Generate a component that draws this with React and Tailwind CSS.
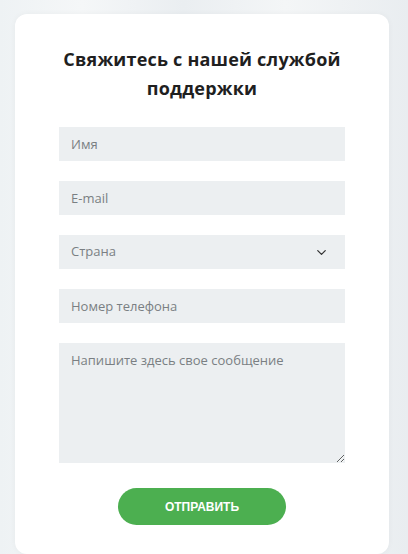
import { ChevronDown } from "lucide-react";

const fieldBase =
  "w-full h-[34px] bg-[#eceff1] px-[12px] text-[13px] placeholder:text-[#7a7f83] outline-none";

export default function App() {
  return (
    <div className="min-h-[554px] w-[408px] bg-[#eef2f4] bg-[linear-gradient(90deg,#eef2f4_0%,#f5f7f8_20%,#eaeef1_45%,#f4f6f7_70%,#e9edf0_100%)] pt-[14px] pl-[15px] font-['Open_Sans',sans-serif] overflow-hidden">
      <div className="w-[374px] h-[540px] bg-white rounded-[12px] shadow-[0_0_6px_rgba(0,0,0,0.04)] pt-[31px] px-[44px]">
        <h1 className="text-center text-[18px] leading-[29px] font-bold text-[#1f1f1f] tracking-[0.2px]">
          Свяжитесь с нашей службой
          <br />
          поддержки
        </h1>

        <form className="mt-[24px] flex flex-col gap-[20px]">
          <input className={fieldBase + " text-[#555]"} placeholder="Имя" />
          <input className={fieldBase + " text-[#555]"} placeholder="E-mail" />
          <div className="relative">
            <select
              className={fieldBase + " appearance-none text-[#7a7f83]"}
              defaultValue=""
            >
              <option value="" disabled>
                Страна
              </option>
            </select>
            <ChevronDown
              className="absolute right-[16px] top-[10px] text-[#333] pointer-events-none"
              size={15}
              strokeWidth={2}
            />
          </div>
          <input className={fieldBase + " text-[#555]"} placeholder="Номер телефона" />
          <textarea
            className="w-full h-[120px] bg-[#eceff1] px-[12px] pt-[8px] text-[13px] text-[#555] placeholder:text-[#7a7f83] outline-none"
            placeholder="Напишите здесь свое сообщение"
          />
          <div className="flex justify-center mt-[5px]">
            <button
              type="button"
              className="w-[168px] h-[37px] rounded-full bg-[#4caf50] text-white text-[12px] font-bold font-['Liberation_Sans',sans-serif] uppercase"
            >
              Отправить
            </button>
          </div>
        </form>
      </div>
    </div>
  );
}
